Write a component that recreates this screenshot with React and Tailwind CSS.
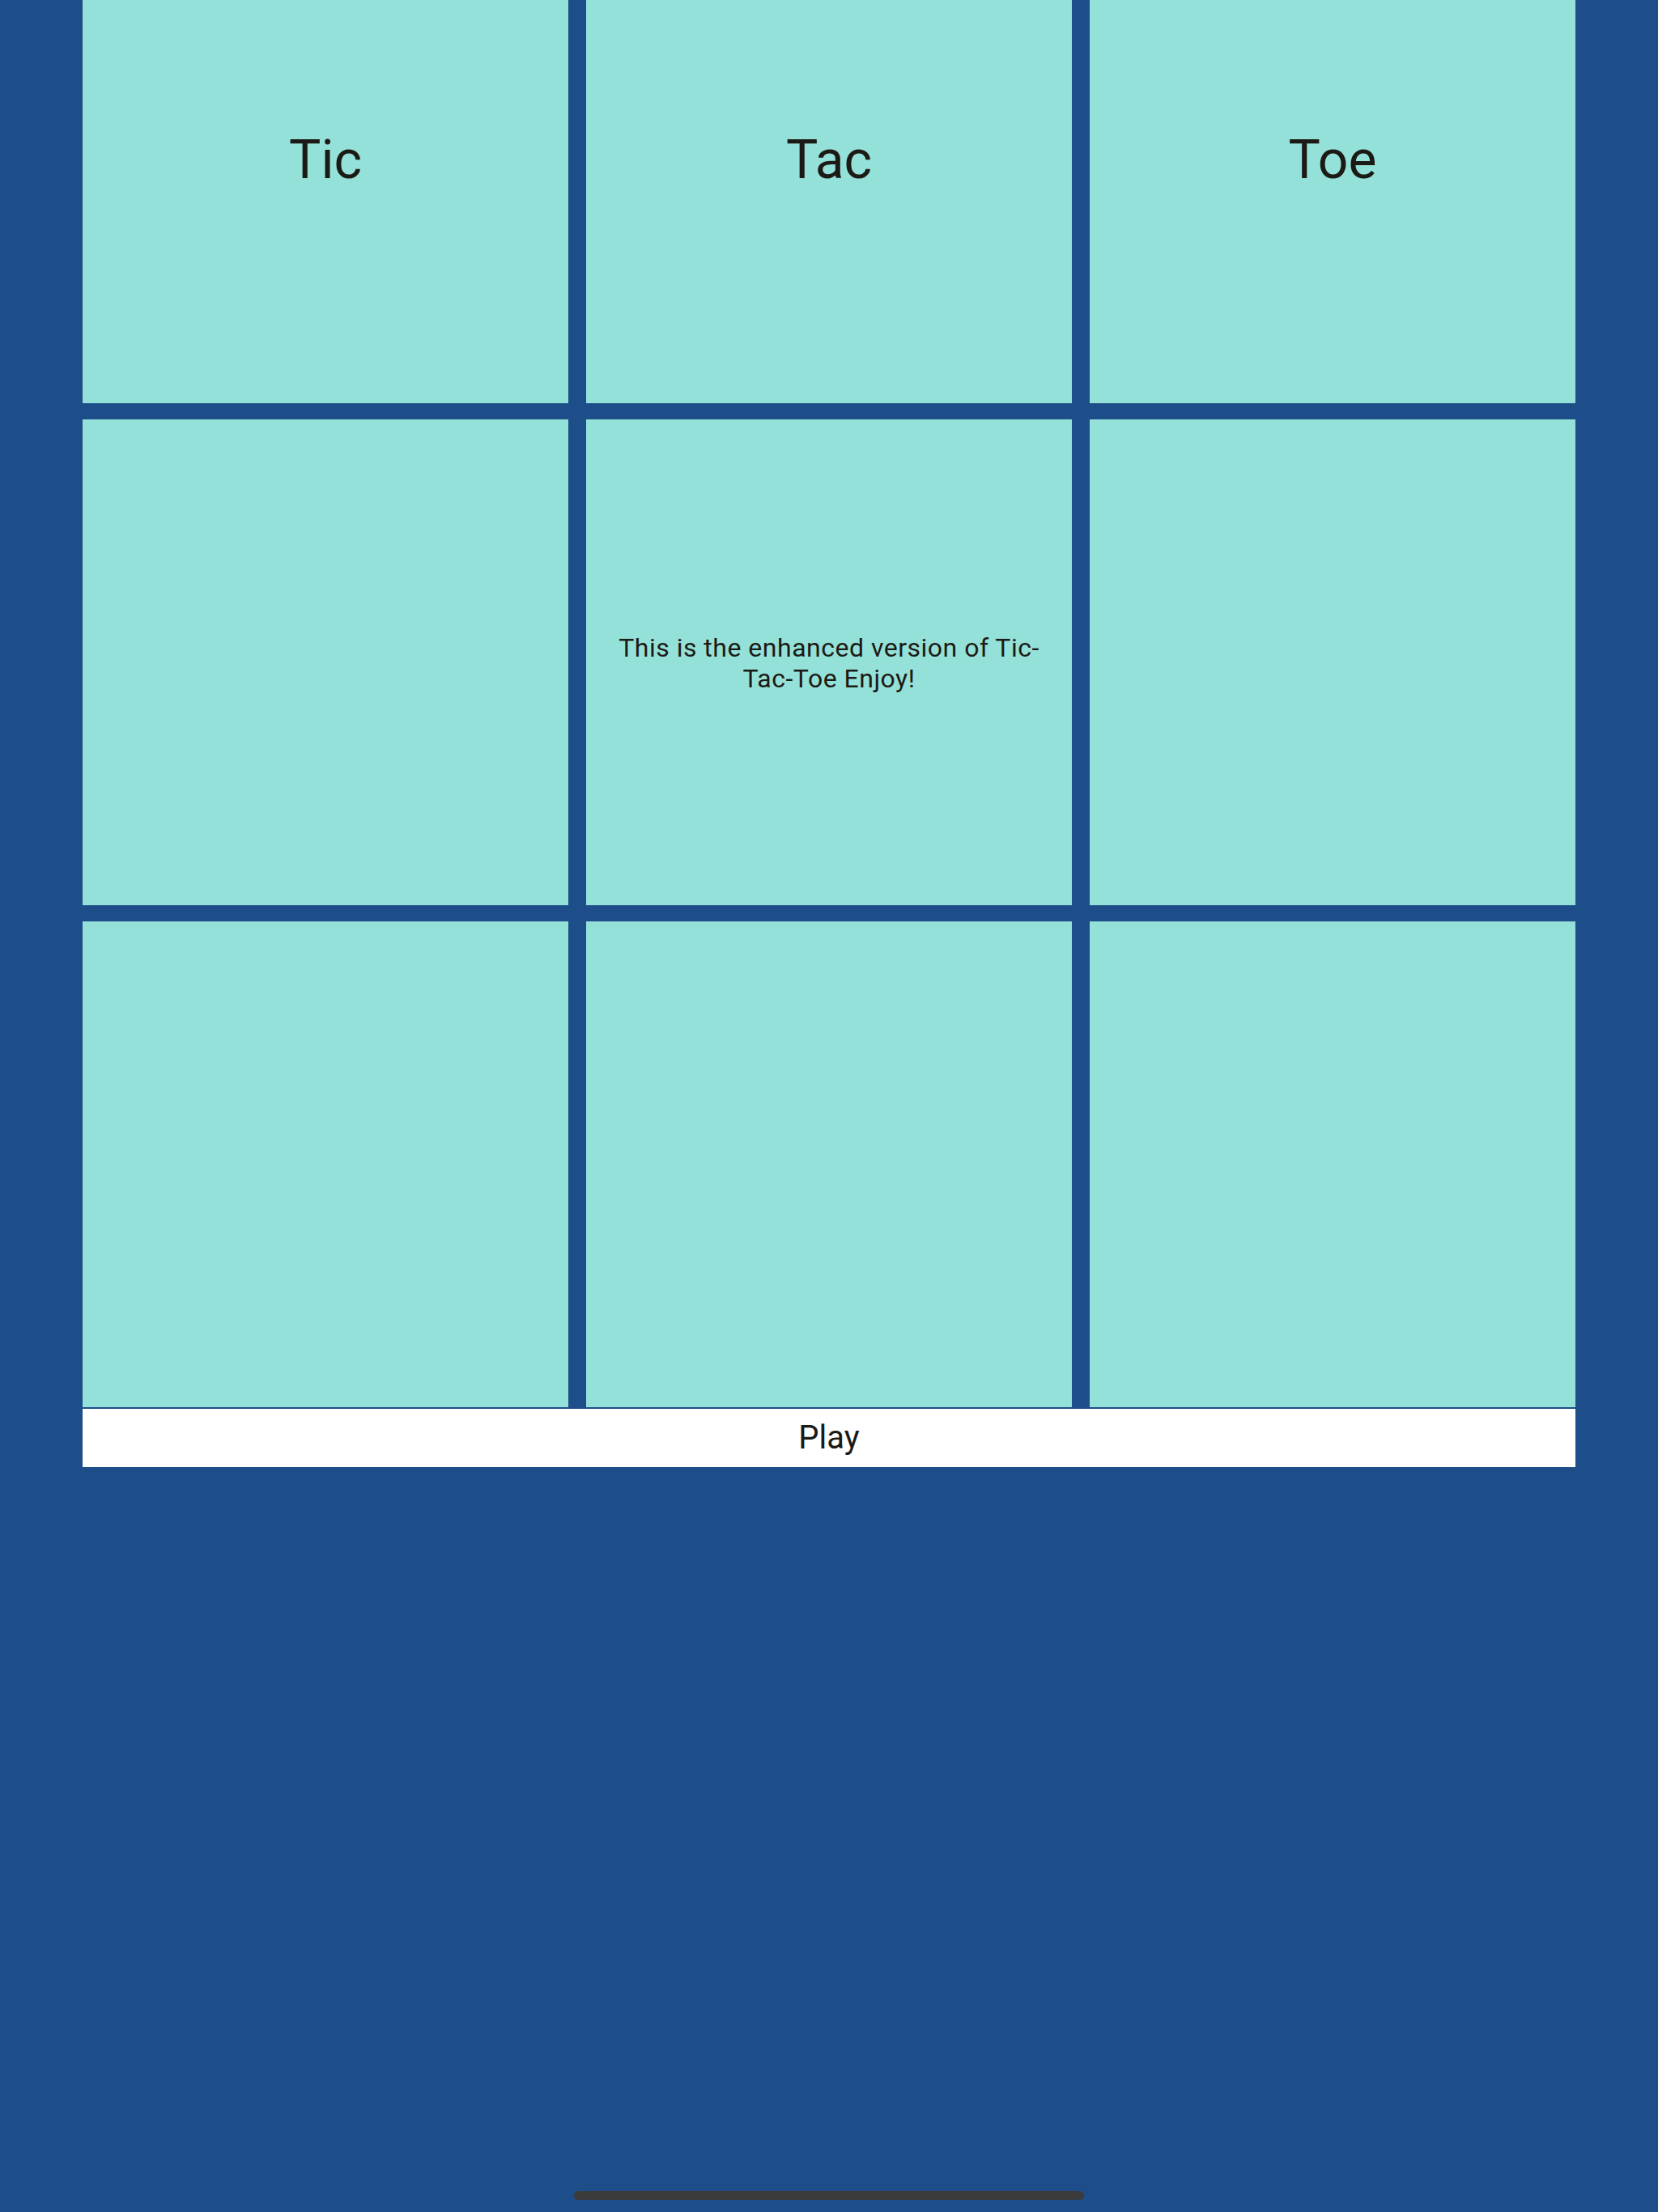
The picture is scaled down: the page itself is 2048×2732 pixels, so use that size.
export default function App() {
  const cells = ["Tic", "Tac", "Toe", "", "mid", "", "", "", ""];
  return (
    <div className="relative w-[2048px] h-[2732px] overflow-hidden bg-[#1d4e89]" style={{ fontFamily: "Roboto, 'Noto Sans', sans-serif" }}>
      <div className="ml-[102px] w-[1844px] -mt-[102px] grid grid-cols-3 gap-x-[22px] gap-y-[20px]">
        {cells.map((c, i) => (
          <div key={i} className="h-[600px] bg-[#94e1d9] flex items-center justify-center text-[#1c1a14]">
            {c === "mid" ? (
              <p className="text-[32px] leading-[38px] tracking-[0.5px] text-center px-[36px] pt-[2px]">
                This is the enhanced version of Tic-Tac-Toe Enjoy!
              </p>
            ) : (
              <span className="text-[66px] leading-none">{c}</span>
            )}
          </div>
        ))}
      </div>
      <div className="ml-[102px] w-[1844px] mt-[2px] h-[72px] bg-white flex items-center justify-center text-[40px] text-[#1c1a14]">
        Play
      </div>
      <div className="absolute left-[709px] top-[2706px] w-[630px] h-[11px] rounded-full bg-[#3b3b3b]" />
    </div>
  );
}
